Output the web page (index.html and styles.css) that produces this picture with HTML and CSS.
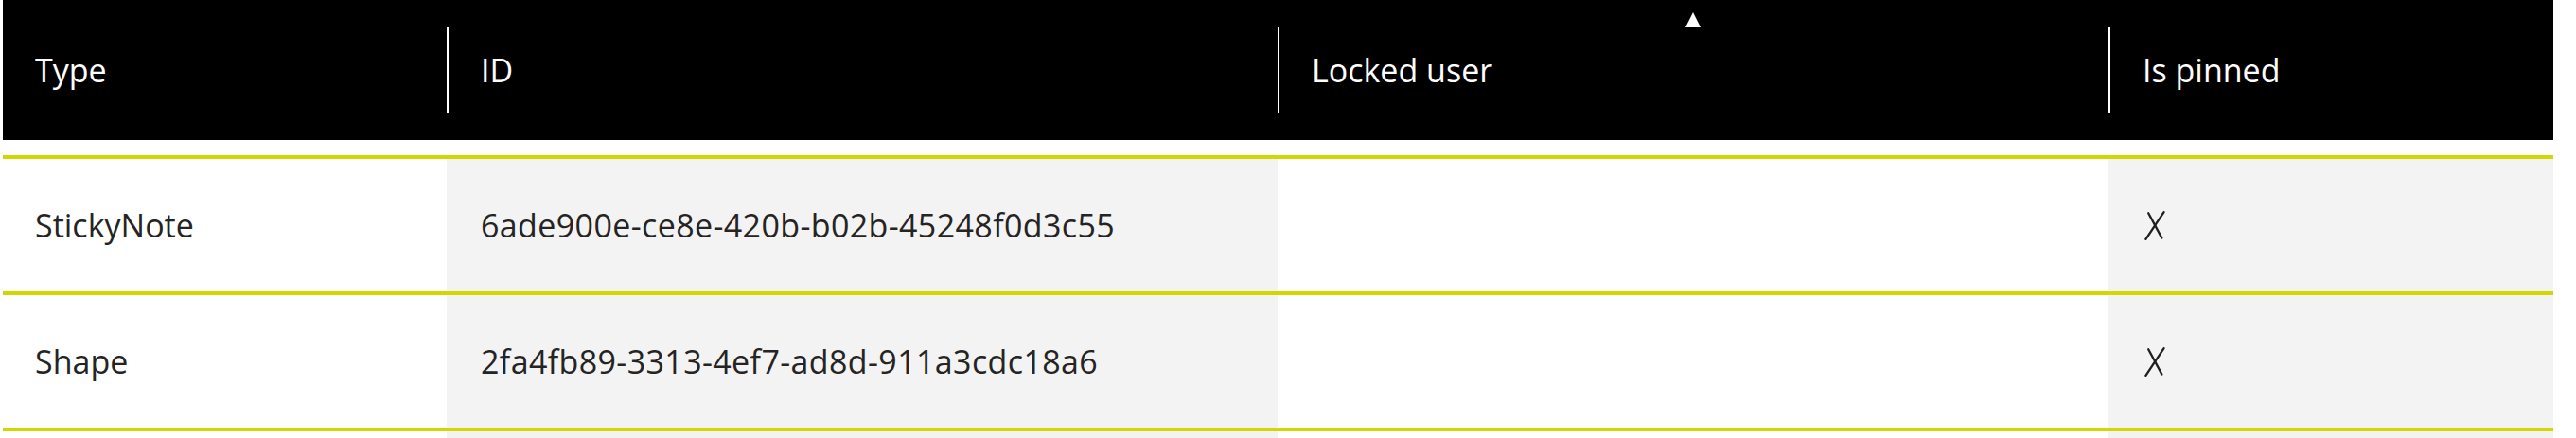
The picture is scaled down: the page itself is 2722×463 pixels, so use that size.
FILE: index.html
```html
<!DOCTYPE html>
<html lang="en">
<head>
<meta charset="utf-8">
<title>Objects table</title>
<link rel="stylesheet" href="styles.css">
</head>
<body>
<div class="table">
  <div class="head">
    <div class="hcell first"><div class="hlabel">Type</div></div>
    <div class="hcell"><div class="hlabel">ID</div></div>
    <div class="hcell sorted">
      <span class="sort-arrow"></span>
      <div class="hlabel">Locked user</div>
    </div>
    <div class="hcell"><div class="hlabel">Is pinned</div></div>
  </div>
  <div class="body">
    <div class="row">
      <div class="cell">StickyNote</div>
      <div class="cell alt id">6ade900e-ce8e-420b-b02b-45248f0d3c55</div>
      <div class="cell"></div>
      <div class="cell alt">
        <svg class="cross" width="22" height="31" viewBox="0 0 22 31" aria-label="false">
          <line x1="4.2" y1="2.2" x2="18.4" y2="28.6" />
          <line x1="20.6" y1="1.2" x2="1.4" y2="29.8" />
        </svg>
      </div>
    </div>
    <div class="row">
      <div class="cell">Shape</div>
      <div class="cell alt id">2fa4fb89-3313-4ef7-ad8d-911a3cdc18a6</div>
      <div class="cell"></div>
      <div class="cell alt">
        <svg class="cross" width="22" height="31" viewBox="0 0 22 31" aria-label="false">
          <line x1="4.2" y1="2.2" x2="18.4" y2="28.6" />
          <line x1="20.6" y1="1.2" x2="1.4" y2="29.8" />
        </svg>
      </div>
    </div>
    <div class="row">
      <div class="cell"></div>
      <div class="cell alt"></div>
      <div class="cell"></div>
      <div class="cell alt"></div>
    </div>
  </div>
</div>
</body>
</html>
```

FILE: styles.css
```css
html, body {
  margin: 0;
  padding: 0;
  background: #ffffff;
}

body {
  font-family: "Open Sans", "Noto Sans", "Liberation Sans", sans-serif;
  font-size: 34px;
  color: #252423;
  overflow: hidden;
}

.table {
  width: 2695px;
  margin-left: 3px;
}

.head,
.row {
  display: grid;
  grid-template-columns: 469px 878px 878px 470px;
}

.head {
  background: #000000;
  height: 148px;
  color: #ffffff;
}

.hcell {
  position: relative;
  display: flex;
  align-items: center;
}

.hlabel {
  height: 90px;
  display: flex;
  align-items: center;
  padding-left: 34px;
  border-left: 2px solid #ffffff;
  flex: 1;
}

.hcell.first .hlabel {
  border-left: none;
  padding-left: 34px;
}

.sort-arrow {
  position: absolute;
  top: 13px;
  left: 50%;
  margin-left: -8px;
  width: 0;
  height: 0;
  border-left: 8px solid transparent;
  border-right: 8px solid transparent;
  border-bottom: 16px solid #ffffff;
}

.body {
  margin-top: 16px;
}

.row {
  border-top: 4px solid #d3d700;
  height: 140px;
}

.cell {
  display: flex;
  align-items: center;
  padding-left: 34px;
  white-space: nowrap;
}

.cell:nth-child(2),
.cell:nth-child(4) {
  padding-left: 36px;
}

.cell.id {
  letter-spacing: 0.38px;
}

.cell.alt {
  background: #f3f3f3;
}

.cross {
  display: block;
  margin-left: 2px;
  stroke: #201f1e;
  stroke-width: 2.3;
  stroke-linecap: round;
  fill: none;
}
```
